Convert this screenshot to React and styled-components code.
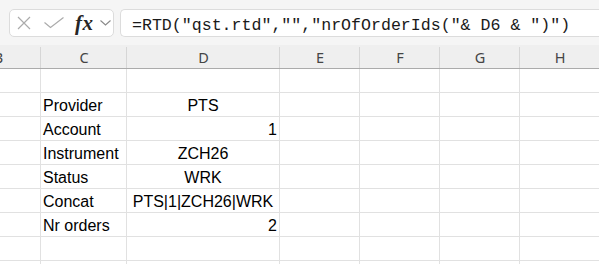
import React from "react";
import styled, { createGlobalStyle } from "styled-components";

const Global = createGlobalStyle`
  html, body { margin: 0; padding: 0; background: #ffffff; overflow: hidden; }
  body { width: 599px; height: 264px; }
  * { box-sizing: border-box; }
`;

const Page = styled.div`
  width: 599px;
  height: 264px;
  overflow: hidden;
  display: flex;
  flex-direction: column;
`;

const Toolbar = styled.div`
  height: 45px;
  flex: none;
  background: #f5f5f5;
  display: flex;
  align-items: flex-start;
  padding: 9px 0 0 9px;
  gap: 6px;
`;

const NameBox = styled.div`
  width: 105px;
  height: 28px;
  flex: none;
  background: #ffffff;
  border: 1px solid #dcdcdc;
  border-radius: 5px;
  display: flex;
  align-items: center;
  padding-left: 7px;
`;

const IconSlot = styled.span`
  display: flex;
  align-items: center;
  justify-content: center;
  flex: none;
  width: ${(p) => p.$w}px;
  margin-left: ${(p) => p.$ml || 0}px;
`;

const Fx = styled.span`
  font-family: "Liberation Serif", "DejaVu Serif", serif;
  font-style: italic;
  font-weight: 700;
  font-size: 21px;
  line-height: 20px;
  color: #262626;
  width: 19px;
  margin-left: 11px;
  flex: none;
  letter-spacing: 0.5px;
`;

const FormulaBox = styled.div`
  flex: 1;
  height: 28px;
  background: #ffffff;
  border: 1px solid #dcdcdc;
  border-right: none;
  border-radius: 5px 0 0 5px;
  padding: 5px 0 0 11px;
  font-family: "Liberation Mono", "DejaVu Sans Mono", monospace;
  font-size: 16.6px;
  line-height: 21px;
  color: #1a1a1a;
  white-space: pre;
  overflow: hidden;
`;

const Grid = styled.div`
  display: grid;
  grid-template-columns: 85px 86px 153px 80px 80px 80px 80px;
  grid-auto-rows: 24px;
  margin-left: -44px;
  width: 644px;
`;

const HeadCell = styled.div`
  background: #efefef;
  border-bottom: 1px solid #ababab;
  position: relative;
  text-align: center;
  font-family: "Noto Sans", "Open Sans", sans-serif;
  font-size: 14.5px;
  line-height: 22px;
  padding-top: 1px;
  color: #454545;
  &::after {
    content: "";
    position: absolute;
    right: 0;
    top: 2px;
    bottom: 0;
    width: 1px;
    background: #d6d6d6;
  }
`;

const Cell = styled.div`
  border-right: 1px solid #e1e1e1;
  border-bottom: 1px solid #e1e1e1;
  font-family: "Liberation Sans", Arial, sans-serif;
  font-size: 16px;
  line-height: 21px;
  padding: 2px 2px 0 2px;
  color: #000000;
  text-align: ${(p) => p.$align || "left"};
  white-space: nowrap;
  overflow: visible;
`;

const CloseIcon = () => (
  <svg width="14" height="14" viewBox="0 0 14 14">
    <path d="M1 1 L13 13 M13 1 L1 13" stroke="#ababab" strokeWidth="1.2" fill="none" />
  </svg>
);

const CheckIcon = () => (
  <svg width="20" height="12" viewBox="0 0 20 12">
    <path d="M0.5 5.5 L6.5 10.5 L19.5 0.5" stroke="#ababab" strokeWidth="1.2" fill="none" />
  </svg>
);

const Chevron = () => (
  <svg width="11" height="6" viewBox="0 0 11 6">
    <path d="M0.5 0.5 L5.5 5 L10.5 0.5" stroke="#8a8a8a" strokeWidth="1.1" fill="none" />
  </svg>
);

const columns = ["B", "C", "D", "E", "F", "G", "H"];

const rows = [
  ["", ""],
  ["Provider", "PTS", "center"],
  ["Account", "1", "right"],
  ["Instrument", "ZCH26", "center"],
  ["Status", "WRK", "center"],
  ["Concat", "PTS|1|ZCH26|WRK", "center"],
  ["Nr orders", "2", "right"],
  ["", ""],
  ["", ""],
];

export default function App() {
  return (
    <>
      <Global />
      <Page>
        <Toolbar>
          <NameBox>
            <IconSlot $w={14}>
              <CloseIcon />
            </IconSlot>
            <IconSlot $w={20} $ml={13}>
              <CheckIcon />
            </IconSlot>
            <Fx>fx</Fx>
            <IconSlot $w={11} $ml={6}>
              <Chevron />
            </IconSlot>
          </NameBox>
          <FormulaBox>{'=RTD("qst.rtd","","nrOfOrderIds("& D6 & ")")'}</FormulaBox>
        </Toolbar>
        <Grid>
          {columns.map((c) => (
            <HeadCell key={c}>{c}</HeadCell>
          ))}
          {rows.map((r, i) => (
            <React.Fragment key={i}>
              <Cell />
              <Cell>{r[0]}</Cell>
              <Cell $align={r[2]}>{r[1]}</Cell>
              <Cell />
              <Cell />
              <Cell />
              <Cell />
            </React.Fragment>
          ))}
        </Grid>
      </Page>
    </>
  );
}
